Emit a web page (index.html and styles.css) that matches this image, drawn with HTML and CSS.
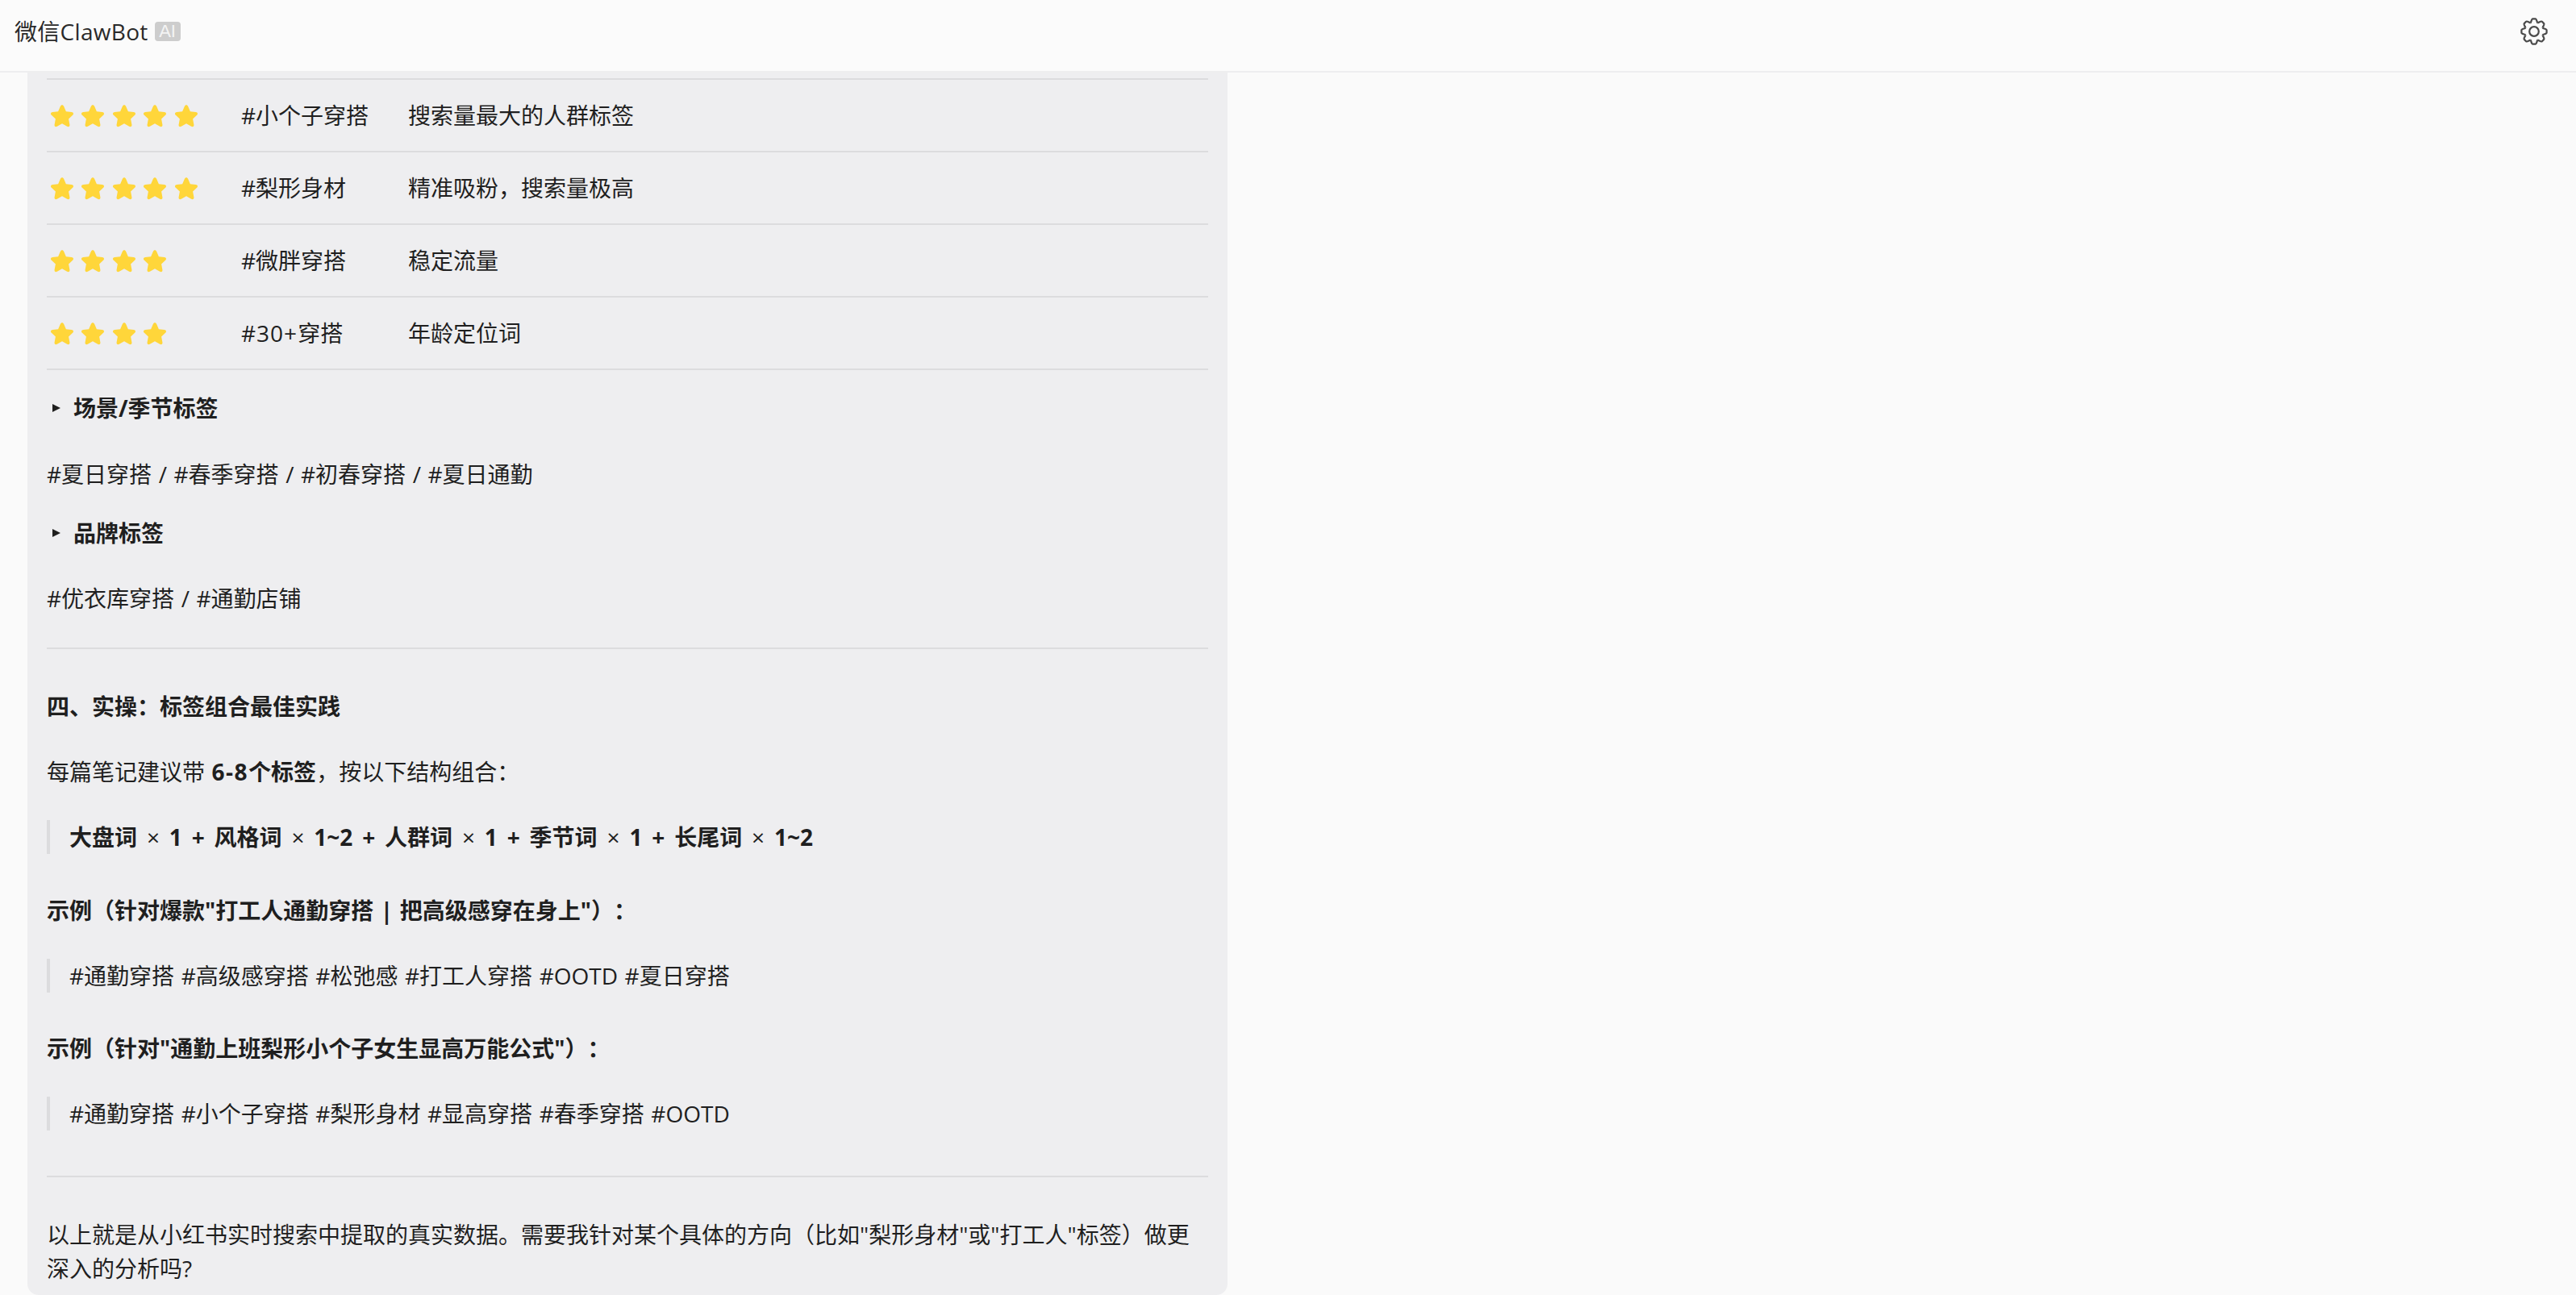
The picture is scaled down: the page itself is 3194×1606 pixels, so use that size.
FILE: index.html
```html
<!DOCTYPE html>
<html lang="zh-CN">
<head>
<meta charset="utf-8">
<title>微信ClawBot</title>
<link rel="stylesheet" href="styles.css">
</head>
<body>
<svg class="defs" width="0" height="0"><defs>
<symbol id="star" viewBox="0 0 30 30"><path d="M15 1.200c1 0 1.700.6 2.200 1.700l2.700 6.300 6.900.8c2.300.3 3 2.200 1.300 3.800l-5 4.700 1.300 7c.4 2.200-1.300 3.400-3.200 2.300l-6.200-3.500-6.200 3.500c-1.900 1.100-3.600-.1-3.200-2.300l1.300-7-5-4.700c-1.700-1.600-1-3.500 1.300-3.800l6.900-.8 2.700-6.300c.5-1.100 1.200-1.700 2.200-1.700z"/></symbol>
<path id="tooth" d="M-4.400-10.600C-3.500-11.500-3.300-15.600-1.600-15.600H1.600C3.300-15.600 3.500-11.500 4.400-10.600"/>
</defs></svg>
<header class="topbar">
  <div class="brand"><span class="brand-name">微信ClawBot</span><span class="ai-badge">AI</span></div>
  <svg class="gear" viewBox="-17 -17 34 34" width="34" height="34">
    <use href="#tooth"/><use href="#tooth" transform="rotate(45)"/><use href="#tooth" transform="rotate(90)"/><use href="#tooth" transform="rotate(135)"/><use href="#tooth" transform="rotate(180)"/><use href="#tooth" transform="rotate(225)"/><use href="#tooth" transform="rotate(270)"/><use href="#tooth" transform="rotate(315)"/>
    <circle r="5.800"/>
  </svg>
</header>
<main class="chat">
  <article class="bubble">
    <table class="tags">
      <tbody>
        <tr><td class="stars"><svg class="star"><use href="#star"/></svg><svg class="star"><use href="#star"/></svg><svg class="star"><use href="#star"/></svg><svg class="star"><use href="#star"/></svg><svg class="star"><use href="#star"/></svg></td><td class="tag">#小个子穿搭</td><td>搜索量最大的人群标签</td></tr>
        <tr><td class="stars"><svg class="star"><use href="#star"/></svg><svg class="star"><use href="#star"/></svg><svg class="star"><use href="#star"/></svg><svg class="star"><use href="#star"/></svg><svg class="star"><use href="#star"/></svg></td><td class="tag">#梨形身材</td><td>精准吸粉，搜索量极高</td></tr>
        <tr><td class="stars"><svg class="star"><use href="#star"/></svg><svg class="star"><use href="#star"/></svg><svg class="star"><use href="#star"/></svg><svg class="star"><use href="#star"/></svg></td><td class="tag">#微胖穿搭</td><td>稳定流量</td></tr>
        <tr><td class="stars"><svg class="star"><use href="#star"/></svg><svg class="star"><use href="#star"/></svg><svg class="star"><use href="#star"/></svg><svg class="star"><use href="#star"/></svg></td><td class="tag"><span class="num">#30+</span>穿搭</td><td>年龄定位词</td></tr>
      </tbody>
    </table>
    <h4 class="sub"><span class="marker"></span>场景/季节标签</h4>
    <p>#夏日穿搭 / #春季穿搭 / #初春穿搭 / #夏日通勤</p>
    <h4 class="sub sub-brand"><span class="marker"></span>品牌标签</h4>
    <p>#优衣库穿搭 / #通勤店铺</p>
    <hr>
    <h3 class="section">四、实操：标签组合最佳实践</h3>
    <p>每篇笔记建议带 <strong><span class="num-bold">6-8</span>个标签</strong>，按以下结构组合：</p>
    <blockquote><strong class="formula">大盘词 <span class="times">×</span> 1 + 风格词 <span class="times">×</span> 1~2 + 人群词 <span class="times">×</span> 1 + 季节词 <span class="times">×</span> 1 + 长尾词 <span class="times">×</span> 1~2</strong></blockquote>
    <p><strong>示例（针对爆款"打工人通勤穿搭 | 把高级感穿在身上"）：</strong></p>
    <blockquote>#通勤穿搭 #高级感穿搭 #松弛感 #打工人穿搭 #OOTD #夏日穿搭</blockquote>
    <p><strong>示例（针对"通勤上班梨形小个子女生显高万能公式"）：</strong></p>
    <blockquote>#通勤穿搭 #小个子穿搭 #梨形身材 #显高穿搭 #春季穿搭 #OOTD</blockquote>
    <hr class="hr-last">
    <p class="closing">以上就是从小红书实时搜索中提取的真实数据。需要我针对某个具体的方向（比如"梨形身材"或"打工人"标签）做更深入的分析吗?</p>
  </article>
</main>
</body>
</html>
```
FILE: styles.css
```css
* { box-sizing: border-box; }
html, body { height: 100%; }
body {
  margin: 0;
  background: #fafafa;
  color: #1f1f1f;
  font-family: "Open Sans", "Noto Sans CJK SC", sans-serif;
  font-size: 28px;
  line-height: 42px;
  word-spacing: 1.300px;
  text-spacing-trim: space-all;
  overflow: hidden;
  display: flex;
  flex-direction: column;
}
.defs { position: absolute; }
.topbar {
  flex: none;
  height: 90px;
  border-bottom: 2px solid #eeeeef;
  display: flex;
  align-items: center;
  justify-content: space-between;
  padding: 0 35px 10px 18px;
  background: #fbfbfb;
}
.brand { display: flex; align-items: center; gap: 8px; }
.brand-name { font-size: 28px; color: #2a2a2a; letter-spacing: .3px; }
.ai-badge {
  background: #cdcdcd;
  color: #f4f4f4;
  font-size: 22px;
  line-height: 24px;
  height: 24px;
  width: 32px;
  text-align: center;
  border-radius: 4px;
  font-family: "Liberation Sans", sans-serif;
}
.gear { fill: none; stroke: #4a4a4a; stroke-width: 2.200; stroke-linejoin: round; }
.chat { flex: 1; min-height: 0; overflow: hidden; padding: 0 0 0 34px; }
.bubble {
  width: 1488px;
  height: 100%;
  background: #eeeef0;
  border-radius: 0 0 14px 14px;
  padding: 7px 24px 0;
}
.tags { width: 100%; border-collapse: collapse; border-top: 2px solid #dcdcde; }
.tags td { height: 90px; padding: 0; border-bottom: 2px solid #dcdcde; vertical-align: middle; }
.tags .stars { width: 241px; padding-left: 4px; white-space: nowrap; font-size: 0; line-height: 0; }
.tags .tag { width: 207px; }
.num { letter-spacing: 1px; }
.num-bold { letter-spacing: 1.500px; }
.star { width: 30px; height: 30px; margin-right: 8.400px; fill: #ffd63a; vertical-align: middle; position: relative; top: 1px; }
.sub {
  margin: 26px 0 0;
  font-size: 28px;
  line-height: 42px;
  font-weight: 700;
  display: flex;
  align-items: center;
}
.marker {
  width: 0; height: 0;
  border-left: 10px solid #1f1f1f;
  border-top: 5px solid transparent;
  border-bottom: 5px solid transparent;
  margin: 0 16px 0 7px;
}
p { margin: 0; }
.sub + p { margin-top: 40px; }
.sub-brand { margin-top: 31px; }
.sub-brand + p { margin-top: 39px; }
hr { border: 0; height: 2px; background: #dcdcde; margin: 40px 0 0; }
.section { margin: 50px 0 0; font-size: 28px; line-height: 42px; font-weight: 700; }
.section + p { margin-top: 39px; }
blockquote {
  margin: 39px 0 0;
  padding: 0 0 0 24px;
  border-left: 4px solid #dcdcde;
}
blockquote + p { margin-top: 48.500px; }
.formula { word-spacing: 4.600px; }
.times { font-weight: 400; }
.hr-last { margin-top: 56px; }
.closing { margin-top: 50px; }
```
